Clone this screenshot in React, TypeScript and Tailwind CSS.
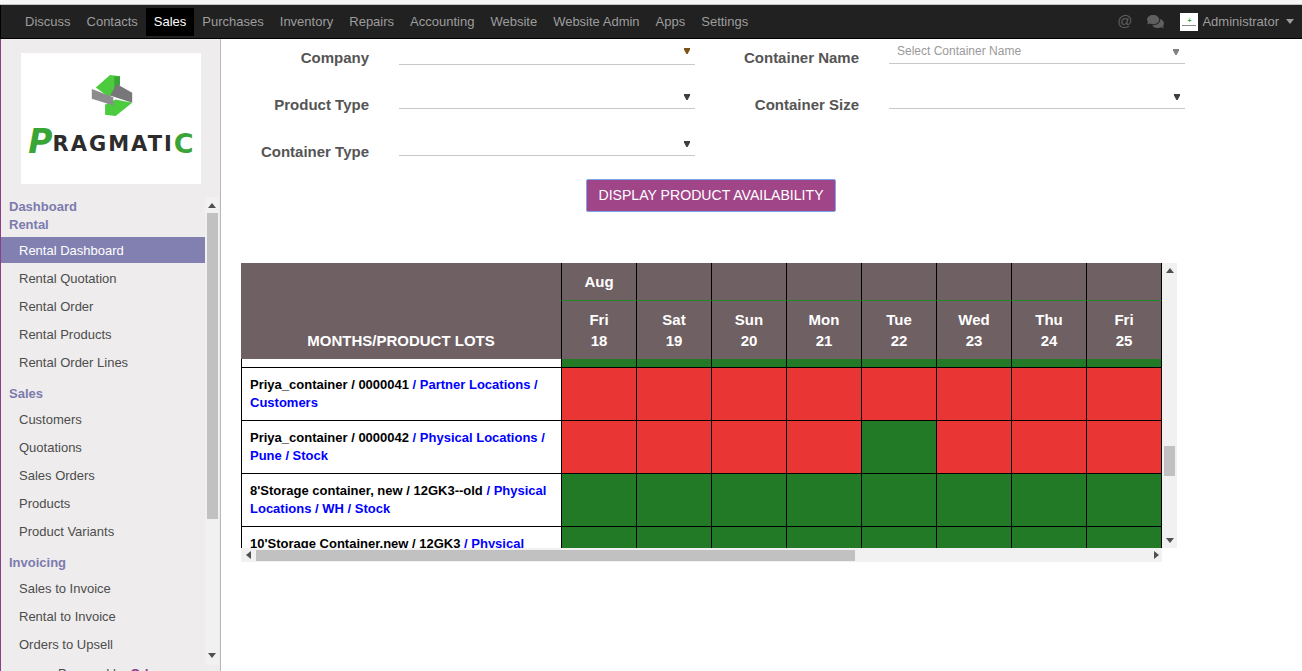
import { FaComments } from "react-icons/fa";

const nav = ["Discuss", "Contacts", "Sales", "Purchases", "Inventory", "Repairs", "Accounting", "Website", "Website Admin", "Apps", "Settings"];

const menu: { head: string; items: string[] }[] = [
  { head: "Rental", items: ["Rental Dashboard", "Rental Quotation", "Rental Order", "Rental Products", "Rental Order Lines"] },
  { head: "Sales", items: ["Customers", "Quotations", "Sales Orders", "Products", "Product Variants"] },
  { head: "Invoicing", items: ["Sales to Invoice", "Rental to Invoice", "Orders to Upsell"] },
];

const days = [["Fri", "18"], ["Sat", "19"], ["Sun", "20"], ["Mon", "21"], ["Tue", "22"], ["Wed", "23"], ["Thu", "24"], ["Fri", "25"]];

const rows: { name: string; loc: string; cells: string }[] = [
  { name: "Priya_container / 0000041", loc: " / Partner Locations / Customers", cells: "rrrrrrrr" },
  { name: "Priya_container / 0000042", loc: " / Physical Locations / Pune / Stock", cells: "rrrrgrrr" },
  { name: "8'Storage container, new / 12GK3--old", loc: " / Physical Locations / WH / Stock", cells: "gggggggg" },
  { name: "10'Storage Container.new / 12GK3", loc: " / Physical Locations / WH / Stock", cells: "gggggggg" },
];

function Tri({ dir, color = "#505050" }: { dir: "up" | "down" | "left" | "right"; color?: string }) {
  const pts = { up: "0,5 4,0 8,5", down: "0,0 8,0 4,5", left: "5,0 5,8 0,4", right: "0,0 0,8 5,4" }[dir];
  const vertical = dir === "up" || dir === "down";
  return (
    <svg width={vertical ? 8 : 5} height={vertical ? 5 : 8} viewBox={vertical ? "0 0 8 5" : "0 0 5 8"} className="block shrink-0">
      <polygon points={pts} fill={color} />
    </svg>
  );
}

function Select({ h, arrow, children, color }: { h: string; arrow: string; children?: React.ReactNode; color?: string }) {
  return (
    <div className={`${h} flex items-start justify-between border-b border-[#c8c8c8] pl-2 pr-[5px]`}>
      <span className="text-[12px] leading-[24px] text-[#9a9a9a]">{children}</span>
      <span className={arrow}>
        <svg width="6" height="6" viewBox="0 0 6 6" className="block">
          <polygon points="0,0 6,0 6,1.5 3.6,6 2.4,6 0,1.5" fill={color ?? "#3f3f3f"} />
        </svg>
      </span>
    </div>
  );
}

function Label({ children }: { children: React.ReactNode }) {
  return <div className="pr-[30px] pt-[9px] text-right text-[15px] font-bold leading-[20px] text-[#555555]">{children}</div>;
}

export default function App() {
  return (
    <div className="flex h-[671px] w-[1302px] flex-col overflow-hidden bg-white font-['Liberation_Sans',sans-serif]">
      <div className="h-[5px] shrink-0 border-b border-[#c4c4c4] bg-[#f6f6f6]" />
      <header className="flex h-[34px] shrink-0 items-center border-b border-l border-black bg-[#212121] pl-[16px] text-[13px] text-[#9d9d9d]">
        {nav.map((n) => (
          <div key={n} className={n === "Sales" ? "flex h-[28px] items-center bg-black px-2 text-white" : "flex h-[28px] items-center px-2"}>
            {n}
          </div>
        ))}
        <div className="ml-auto flex items-center pr-[8px]">
          <span className="mb-[2px] text-[15px] leading-none text-[#5f5f5f]">@</span>
          <FaComments className="ml-[15px] text-[#5f5f5f]" size={17} />
          <div className="ml-[16px] flex h-[18px] w-[18px] flex-col items-center justify-center bg-white">
            <span className="text-[7px] font-bold leading-[6px] text-[#3fa535]">+</span>
            <span className="mt-[1px] h-[1px] w-[14px] bg-[#8a8a8a]" />
          </div>
          <span className="ml-[4px]">Administrator</span>
          <span className="ml-[7px]">
            <Tri dir="down" color="#9d9d9d" />
          </span>
        </div>
      </header>

      <div className="flex min-h-0 flex-1">
        <aside className="flex w-[221px] shrink-0 flex-col overflow-hidden border-r border-l border-r-[#b8b8b8] border-l-[#8b3f86] bg-[#eeeced]">
          <div className="mx-[20px] mt-[14px] flex h-[131px] w-[180px] shrink-0 flex-col items-center bg-white">
            <svg width="43" height="43" viewBox="250 85 125 130" className="ml-[3px] mt-[21px] block">
              <polygon points="305,88 335,92 335,118 302,155 262,126" fill="#4ccb3e" />
              <polygon points="318,92 335,92 335,118 318,135" fill="#3aa537" />
              <polygon points="290,178 322,162 372,172 322,212 290,208" fill="#4ccb3e" />
              <polygon points="325,115 372,142 372,172 305,150" fill="#77777a" />
              <polygon points="250,130 315,155 315,180 250,160" fill="#8c8c8e" />
            </svg>
            <div className="mt-[10px] flex items-end font-['DejaVu_Sans',sans-serif] font-bold leading-none text-[#2c2c2c]">
              <span className="text-[33px] italic leading-[30px] text-[#3aa537]">P</span>
              <span className="text-[21px] leading-[26px] tracking-[2px]">RAGMATI</span>
              <span className="text-[27px] leading-[27px] text-[#3aa537]">C</span>
            </div>
          </div>

          <div className="mt-[13px] flex min-h-0 flex-1">
            <nav className="w-[204px] shrink-0 overflow-hidden pt-[1px] text-[13px]">
              <div className="h-[18px] pl-[8px] font-bold leading-[18px] text-[#7c7bad]">Dashboard</div>
              {menu.map((s, i) => (
                <div key={s.head} className={i === 0 ? "" : "mt-[9px]"}>
                  <div className="mb-[4px] h-[18px] pl-[8px] font-bold leading-[18px] text-[#7c7bad]">{s.head}</div>
                  {s.items.map((it) => (
                    <div
                      key={it}
                      className={
                        it === "Rental Dashboard"
                          ? "mb-[3px] -mt-[1px] h-[26px] bg-[#8280b1] pl-[18px] leading-[28px] text-white"
                          : "mb-[2px] h-[26px] pl-[18px] leading-[26px] text-[#4c4c4c]"
                      }
                    >
                      {it}
                    </div>
                  ))}
                </div>
              ))}
              <div className="mt-[7px] pl-[57px] leading-[18px] text-[#4c4c4c]">
                Powered by <span className="font-bold text-[#8b3f86]">Odoo</span>
              </div>
            </nav>
            <div className="flex h-[468px] w-[14px] shrink-0 flex-col items-center bg-[#f1f1f1] pt-[6px]">
              <Tri dir="up" />
              <div className="mt-[5px] h-[306px] w-[11px] bg-[#c1c1c1]" />
              <div className="mt-[134px]">
                <Tri dir="down" />
              </div>
            </div>
          </div>
        </aside>

        <main className="min-w-0 flex-1">
          <div className="w-[980px]">
            <div className="grid auto-rows-[38px] grid-cols-[178px_296px_194px_296px] gap-y-[9px]">
              <Label>Company</Label>
              <Select h="h-[26px]" arrow="pt-[9px]" color="#7a5215" />
              <Label>Container Name</Label>
              <Select h="h-[25px]" arrow="pt-[10px] pr-[1px]" color="#808080">Select Container Name</Select>
              <Label>Product Type</Label>
              <Select h="h-[23px]" arrow="pt-[8px]" />
              <Label>Container Size</Label>
              <Select h="h-[23px]" arrow="pt-[8px]" />
              <Label>Container Type</Label>
              <Select h="h-[23px]" arrow="pt-[8px]" />
            </div>
            <div className="mt-[8px] flex h-[34px] items-start justify-center">
              <button className="h-[33px] w-[250px] rounded-[2px] border border-[#7ba6ea] bg-[#a04587] text-[14.1px] text-white">
                DISPLAY PRODUCT AVAILABILITY
              </button>
            </div>
          </div>

          <div className="ml-[20px] mt-[50px] w-[936px]">
            <div className="flex">
              <div className="h-[285px] w-[921px] overflow-hidden">
                <div className="grid w-[921px] grid-cols-[320px_repeat(7,75px)_76px] grid-rows-[37px_59px] bg-[#6f6064] text-center text-[15px] font-bold leading-[21px] text-white">
                  <div className="row-span-2 flex items-end justify-center pb-[8px]">MONTHS/PRODUCT LOTS</div>
                  {days.map((_, i) => (
                    <div key={i} className={i === 7 ? "border-x border-black pt-[8px]" : "border-l border-black pt-[8px]"}>
                      {i === 0 ? "Aug" : ""}
                    </div>
                  ))}
                  {days.map(([d, n], i) => (
                    <div key={i} className={i === 7 ? "border-x border-t border-x-black border-t-[#1f8a22] pt-[8px]" : "border-l border-t border-l-black border-t-[#1f8a22] pt-[8px]"}>
                      {d}
                      <br />
                      {n}
                    </div>
                  ))}
                </div>
                <div className="grid h-[9px] w-[921px] grid-cols-[320px_repeat(7,75px)_76px] border-b border-black">
                  <div className="border-l border-black bg-white" />
                  {days.map((_, i) => (
                    <div key={i} className={i === 7 ? "border-x border-black bg-[#237a26]" : "border-l border-black bg-[#237a26]"} />
                  ))}
                </div>
                {rows.map((r) => (
                  <div key={r.name} className="grid h-[53px] w-[921px] grid-cols-[320px_repeat(7,75px)_76px] border-b border-black">
                    <div className="border-l border-black bg-white pl-[8px] pr-[6px] pt-[8px] text-[13px] font-bold leading-[18px] text-black">
                      {r.name}
                      <span className="text-[#0000ff]">{r.loc}</span>
                    </div>
                    {r.cells.split("").map((c, i) => (
                      <div
                        key={i}
                        className={
                          (c === "r" ? "bg-[#ea3535] " : "bg-[#237a26] ") + (i === 7 ? "border-x border-black" : "border-l border-black")
                        }
                      />
                    ))}
                  </div>
                ))}
              </div>
              <div className="flex h-[285px] w-[15px] flex-col items-center bg-[#f1f1f1] pt-[5px]">
                <Tri dir="up" />
                <div className="mt-[173px] h-[30px] w-[11px] bg-[#c1c1c1]" />
                <div className="mt-[62px]">
                  <Tri dir="down" />
                </div>
              </div>
            </div>
            <div className="flex h-[14px] w-[921px] items-center bg-[#f1f1f1] pl-[5px] pr-[3px]">
              <Tri dir="left" />
              <div className="ml-[5px] h-[11px] w-[599px] bg-[#c1c1c1]" />
              <div className="ml-auto">
                <Tri dir="right" />
              </div>
            </div>
          </div>
        </main>
      </div>
    </div>
  );
}
